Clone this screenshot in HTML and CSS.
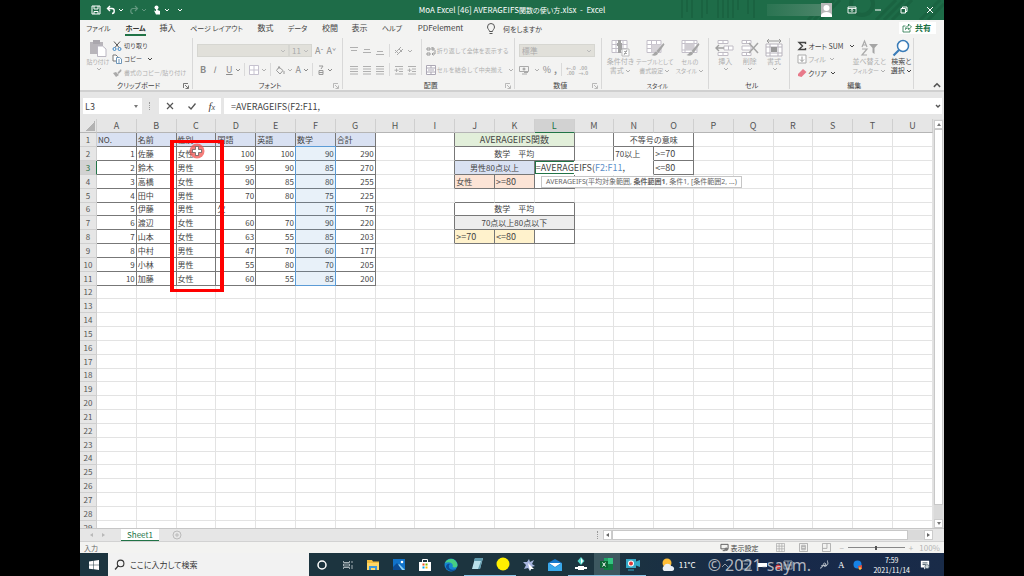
FILE: index.html
```html
<!DOCTYPE html>
<html lang="ja">
<head>
<meta charset="utf-8">
<title>MoA Excel [46] AVERAGEIFS関数の使い方.xlsx - Excel</title>
<link rel="stylesheet" href="styles.css">
</head>
<body>
<svg class="defs" aria-hidden="true">
  <symbol id="chev" viewBox="0 0 6 6"><path d="M1 2l2 2 2-2" fill="none" stroke="currentColor"/></symbol>
  <symbol id="launch" viewBox="0 0 6 6"><path d="M.5 5V.5H5M2 2l3 3M5.500 2.500v3h-3" fill="none" stroke="currentColor" stroke-width=".8"/></symbol>
  <symbol id="lines" viewBox="0 0 10 10"><path d="M1 1.500h8M1 4h8M1 6.500h8M1 9h8" stroke="currentColor"/></symbol>
  <symbol id="top" viewBox="0 0 10 10"><path d="M1 1.500h8M2 4.500h6" stroke="currentColor"/></symbol>
  <symbol id="middle" viewBox="0 0 10 10"><path d="M2 3.500h6M1 6.500h8" stroke="currentColor"/></symbol>
  <symbol id="bottom" viewBox="0 0 10 10"><path d="M2 5.500h6M1 8.500h8" stroke="currentColor"/></symbol>
  <symbol id="indent" viewBox="0 0 10 10"><path d="M1 1.500h8M5 4h4M5 6.500h4M1 9h8M.5 5.200h4M2.500 3.500v3.500" stroke="currentColor"/></symbol>
  <symbol id="grid" viewBox="0 0 10 10"><path d="M.5.5h9v9h-9zM.5 3.500h9M.5 6.500h9M3.500.5v9M6.500.5v9" fill="none" stroke="currentColor" stroke-width=".8"/></symbol>
  <symbol id="borders" viewBox="0 0 10 10"><path d="M.5.5h9v9h-9zM.5 5h9M5 .5v9" fill="#fff" stroke="#c6c2cf"/></symbol>
  <symbol id="tablebrush" viewBox="0 0 20 18"><path d="M2 1.500h14v12H2zM2 5.500h14M2 9.500h14M6.500 1.500v12M11.500 1.500v12" fill="#fff" stroke="#c3bfc9"/><path d="M6.500 5.500h9v8h-9z" fill="#d6d3d8"/><path d="M18.500 4l-7 8 2 2 6-8.500zM11 12.500c-2 .5-2 3-4.500 3.500 3 1.500 6 .5 6.500-2z" fill="#a5a5a5"/></symbol>
  <symbol id="cellbrush" viewBox="0 0 20 18"><path d="M2 1.500h15v12H2zM2 4.500h15M2 11h15M5 1.500v12M14 1.500v12" fill="#fff" stroke="#c3bfc9"/><path d="M5 4.500h9V11H5z" fill="#d0cdd3"/><path d="M18.500 4l-7 8 2 2 6-8.500zM11 12.500c-2 .5-2 3-4.500 3.500 3 1.500 6 .5 6.500-2z" fill="#a5a5a5"/></symbol>
  <symbol id="cellins" viewBox="0 0 20 18"><path d="M3 1.500h10v3H3zM8 1.500v3M3 13.500h10v3H3zM8 13.500v3M9 7h9v4H9zM13.500 7v4" fill="#fff" stroke="#c0bcc5"/><path d="M1 9h8M4 6L1 9l3 3" fill="none" stroke="#a0a0a0" stroke-width="1.400"/></symbol>
  <symbol id="celldel" viewBox="0 0 20 18"><path d="M2 1.500h9v3H2zM6.500 1.500v3M2 13.500h9v3H2zM6.500 13.500v3M2 7h9v4H2z" fill="#fff" stroke="#c0bcc5"/><path d="M9 4l9 10M18 4L9 14" stroke="#a5a5a5" stroke-width="1.500"/></symbol>
  <symbol id="cellfmt" viewBox="0 0 20 18"><path d="M2 5h16v12H2zM6 5v12M14 5v12M2 8h16M2 14h16" fill="#fff" stroke="#b8b4bd"/><path d="M7 8h6v5H7z" fill="#999"/><path d="M3 2h14M5 0L3 2l2 2M15 0l2 2-2 2" fill="none" stroke="#999"/></symbol>
</svg>

<div class="stage">
<main class="app">
  <header class="titlebar">
    <svg class="pattern" viewBox="0 0 264 20" preserveAspectRatio="none" aria-hidden="true"><g stroke="#1a6341" stroke-width="2" fill="none"><path d="M2 0v18M7 0v12M12 0v18M22 0v18M27 0v14M38 0v18M43 0v18M48 0v18M53 0v18M58 0v10M68 0v14M74 0v18"/><path d="M128 20l20-20M134 20l20-20M140 20l20-20M196 20l20-20M204 20l20-20M212 20l20-20M240 20l20-20M248 20l16-16" stroke-width="3"/><circle cx="182" cy="4" r="11" stroke-width="4"/></g></svg>
    <div class="quick">
      <button aria-label="上書き保存"><svg viewBox="0 0 10 10"><path d="M1 1h8v8H1zM3 1v3h4V1M3 9V6.500h4V9" fill="none" stroke="#fff"/></svg></button>
      <button aria-label="元に戻す"><svg viewBox="0 0 10 10"><path d="M4 1L1.500 3.500 4 6M2 3.500h4c3 0 3 5 0 5" fill="none" stroke="#fff" stroke-width="1.400"/></svg><svg class="chev"><use href="#chev"/></svg></button>
      <button class="faint" aria-label="やり直し"><svg viewBox="0 0 10 10"><path d="M6 1l2.500 2.500L6 6M8 3.500H4c-3 0-3 5 0 5" fill="none" stroke="#fff" stroke-width="1.200"/></svg><svg class="chev"><use href="#chev"/></svg></button>
      <button aria-label="タッチ/マウス モード"><svg viewBox="0 0 10 10"><circle cx="4.500" cy="2.500" r="2" fill="#fff"/><path d="M4 2v4L2 5.500 4 9.500h4V6L5.500 5V2z" fill="#fff"/></svg><svg class="chev"><use href="#chev"/></svg></button>
      <button aria-label="カスタマイズ"><svg class="chev"><use href="#chev"/></svg></button>
    </div>
    <h1>MoA Excel [46] AVERAGEIFS<span>関数の使い方</span>.xlsx&nbsp; -&nbsp; Excel</h1>
    <div class="window-tools">
      <span class="account"></span>
      <svg class="avatar" viewBox="0 0 11 14"><path fill="#b9b9b9" d="M0 0h11v14H0z"/><circle cx="5.500" cy="5" r="3" fill="#fff"/><path d="M0 14v-2c2-4 9-4 11 0v2z" fill="#fff"/></svg>
      <button aria-label="リボンの表示オプション"><svg viewBox="0 0 10 10"><path d="M1 2h8v6H1zM1 3.500h8M5 7V4.500M3.800 5.500L5 4.300l1.200 1.200" fill="none" stroke="#fff" stroke-width=".9"/></svg></button>
      <button aria-label="最小化"><svg viewBox="0 0 10 10"><path d="M2 5h6" stroke="#fff"/></svg></button>
      <button aria-label="元に戻す (縮小)"><svg viewBox="0 0 10 10"><path d="M2 3.500h4.500V8H2zM3.500 3.500V2H8v4.500H6.500" fill="none" stroke="#fff"/></svg></button>
      <button aria-label="閉じる"><svg viewBox="0 0 10 10"><path d="M2 2l6 6M8 2L2 8" stroke="#fff"/></svg></button>
    </div>
  </header>

  <nav class="tabs">
    <a href="#" class="kana">ファイル</a><a href="#" class="current kana">ホーム</a><a href="#">挿入</a><a href="#" class="kana">ページ レイアウト</a><a href="#">数式</a><a href="#" class="kana">データ</a><a href="#">校閲</a><a href="#">表示</a><a href="#" class="kana">ヘルプ</a><a href="#">PDFelement</a>
    <a href="#" class="tell kana"><svg viewBox="0 0 10 12"><path d="M3.500 8.500C3.500 7 1.500 6 1.500 4a3.500 3.500 0 0 1 7 0c0 2-2 3-2 4.500zM3.500 10.500h3" fill="none" stroke="#555"/></svg>何をしますか</a>
    <button class="share"><svg viewBox="0 0 10 10"><path d="M3.500 3H1v6h7V6.500M3.500 6.500c0-3 2-3.500 3-3.500V1L9.500 4 6.500 6.500V5c-1 0-2 0-3 1.500z" fill="none" stroke="#217346" stroke-width=".8"/></svg>共有</button>
  </nav>

  <section class="ribbon" aria-label="ホーム">
    <div class="group clipboard">
      <div class="body">
        <button class="big off"><svg viewBox="0 0 18 18"><path d="M1 3h13v12H1z" fill="#b8b5ba"/><path d="M4 1h7v4H4z" fill="#aaa7ad"/><path d="M8.500 7h5l3.500 3v7.500H8.500z" fill="#fff" stroke="#bbb7c2"/></svg>貼り付け<svg class="chev"><use href="#chev"/></svg></button>
        <div class="stack">
          <button><svg viewBox="0 0 10 10"><path d="M2 .5l5 6M8 .5l-5 6" stroke="#555"/><circle cx="2.500" cy="8" r="1.500" fill="none" stroke="#3c86c6"/><circle cx="7.500" cy="8" r="1.500" fill="none" stroke="#3c86c6"/></svg>切り取り</button>
          <button><svg viewBox="0 0 10 10"><path d="M1 1h3l1.500 1.500V7H1z" fill="#fff" stroke="#777"/><path d="M4.500 3.500h3L9.500 5v4.500h-5zM6 6h2M6 8h2" fill="#fff" stroke="#6f96b8"/></svg>コピー<svg class="chev far"><use href="#chev"/></svg></button>
          <button class="off"><svg viewBox="0 0 10 10"><path d="M9 1L5.500 4.500l1 1.500L9.500 3zM1 5l3-1 3 3-3 2z" fill="#aaa"/></svg>書式のコピー/貼り付け</button>
        </div>
      </div>
      <footer>クリップボード<svg class="launch dark"><use href="#launch"/></svg></footer>
    </div>

    <div class="group font">
      <div class="body rows">
        <div class="line">
          <select class="face" aria-label="フォント" disabled><option></option></select><select class="size" aria-label="フォント サイズ" disabled><option>11</option></select>
          <button class="mid letter" aria-label="フォント サイズの拡大">A<sup>ˆ</sup></button><button class="mid letter" aria-label="フォント サイズの縮小">A<sup>ˇ</sup></button>
        </div>
        <div class="line styles">
          <button class="mid letter"><b>B</b></button><button class="mid letter"><i>I</i></button><button class="mid letter"><u>U</u><svg class="chev"><use href="#chev"/></svg></button><hr>
          <button class="off" aria-label="罫線"><svg><use href="#borders"/></svg><svg class="chev"><use href="#chev"/></svg></button><hr>
          <button class="off" aria-label="塗りつぶしの色"><svg viewBox="0 0 10 10"><path d="M4 2l4 3.500L5 9 1.500 5.500zM4 4V1M9 6v3" fill="none" stroke="#999"/></svg><svg class="chev"><use href="#chev"/></svg></button><button class="mid letter">A<svg class="chev"><use href="#chev"/></svg></button><hr>
          <button class="mid ruby" aria-label="ふりがな"><svg viewBox="0 0 8 10"><path d="M2 1h4L4 4M2 5.500h4v4H2zM2 7.500h4" fill="none" stroke="#999"/></svg><svg class="chev"><use href="#chev"/></svg></button>
        </div>
      </div>
      <footer>フォント<svg class="launch"><use href="#launch"/></svg></footer>
    </div>

    <div class="group align">
      <div class="body">
        <div class="rows">
          <div class="line off"><svg><use href="#top"/></svg><svg><use href="#middle"/></svg><svg><use href="#bottom"/></svg><hr><svg viewBox="0 0 10 10"><path d="M1 7l6-6M3 9l6-6M1 4l4 4M5 3l3 3" stroke="#aaa"/></svg><svg class="chev near"><use href="#chev"/></svg></div>
          <div class="line off"><svg><use href="#lines"/></svg><svg><use href="#lines"/></svg><svg><use href="#lines"/></svg><hr><svg><use href="#indent"/></svg><svg><use href="#indent"/></svg></div>
        </div>
        <hr>
        <div class="rows">
          <button class="off"><svg viewBox="0 0 10 10"><path d="M1 2h3v2H1zM6 1v3h2V2H6M1 7h3v2H1zM9 4v4H6M7.500 6.500L6 8l1.500 1.500" fill="none" stroke="#999"/></svg>折り返して全体を表示する</button>
          <button class="off"><svg viewBox="0 0 10 10"><path d="M.5.5h9v9h-9zM.5 3h9M.5 7h9M5 .5V3M5 7v2.500M2 5h6" fill="#fff" stroke="#aca8b5"/></svg>セルを結合して中央揃え<svg class="chev far"><use href="#chev"/></svg></button>
        </div>
      </div>
      <footer>配置<svg class="launch"><use href="#launch"/></svg></footer>
    </div>

    <div class="group number">
      <div class="body rows">
        <select class="format" aria-label="数値の書式" disabled><option>標準</option></select>
        <div class="line off"><svg viewBox="0 0 10 10"><path d="M.5 1.500h9v5h-9z" fill="none" stroke="#aaa"/><circle cx="5" cy="4" r="1.500" fill="#aaa"/><path d="M3 9h5M5 7.500h4" stroke="#aaa"/></svg><svg class="chev"><use href="#chev"/></svg><button class="mid letter">%</button><button class="mid letter"><b>,</b></button><hr><button class="decimals">←.0<br>.00</button><button class="decimals">.00<br>→.0</button></div>
      </div>
      <footer>数値<svg class="launch"><use href="#launch"/></svg></footer>
    </div>

    <div class="group style">
      <div class="body bigs">
        <button class="big off"><svg viewBox="0 0 20 18"><path d="M2 1.500h15v12H2zM2 5.500h15M2 9.500h15M6 1.500v12M13 1.500v12" fill="#fff" stroke="#c3bfc9"/><path d="M8 1h3v3H8zM7 4h5v3H7zM8 7h4v4H8zM8 11h3v3H8z" fill="#a2a2a2"/><path d="M12 10h7v7h-7z" fill="#fff" stroke="#bbb"/><path d="M14 12.500h3M14 14.500h3M17 11l-3 5" stroke="#999" stroke-width=".8"/></svg>条件付き<span>書式<svg class="chev"><use href="#chev"/></svg></span></button>
        <button class="big off tight"><svg><use href="#tablebrush"/></svg>テーブルとして<span>書式設定<svg class="chev"><use href="#chev"/></svg></span></button>
        <button class="big off tight"><svg><use href="#cellbrush"/></svg>セルの<span>スタイル<svg class="chev"><use href="#chev"/></svg></span></button>
      </div>
      <footer class="tight">スタイル</footer>
    </div>

    <div class="group cells">
      <div class="body bigs">
        <button class="big off"><svg><use href="#cellins"/></svg>挿入<svg class="chev"><use href="#chev"/></svg></button>
        <button class="big off"><svg><use href="#celldel"/></svg>削除<svg class="chev"><use href="#chev"/></svg></button>
        <button class="big off"><svg><use href="#cellfmt"/></svg>書式<svg class="chev"><use href="#chev"/></svg></button>
      </div>
      <footer>セル</footer>
    </div>

    <div class="group edit">
      <div class="body">
        <div class="stack">
          <button><svg viewBox="0 0 10 10"><path d="M8.500 3V1.500H2L5.500 5 2 8.500h6.500V7" fill="none" stroke="#444" stroke-width="1.400"/></svg>オート SUM<svg class="chev far"><use href="#chev"/></svg></button>
          <button class="off"><svg viewBox="0 0 10 10"><path d="M1 1h8v8H1z" fill="#fff" stroke="#aaa"/><path d="M5 2.500v5M3 5.500l2 2 2-2" fill="none" stroke="#999"/></svg>フィル<svg class="chev"><use href="#chev"/></svg></button>
          <button><svg viewBox="0 0 10 10"><path d="M6 1l3.500 3L4.500 9 1 8V6z" fill="#e8798a"/></svg>クリア<svg class="chev"><use href="#chev"/></svg></button>
        </div>
        <button class="big off"><svg viewBox="0 0 20 18"><path d="M3 8l2.500-6L8 8M4 6h3M3 10h5l-5 6h5" fill="none" stroke="#aaa" stroke-width="1.200"/><path d="M10 5h9l-3.500 4v6l-2-1.500V9z" fill="#a5a5a5"/></svg>並べ替えと<span class="tight">フィルター<svg class="chev"><use href="#chev"/></svg></span></button>
        <button class="big"><svg viewBox="0 0 20 18"><circle cx="12" cy="7" r="5.500" fill="#fff" stroke="#3a7cb8" stroke-width="1.500"/><path d="M8 11l-5.500 5.500" stroke="#3a7cb8" stroke-width="2.200"/></svg>検索と<span>選択<svg class="chev"><use href="#chev"/></svg></span></button>
      </div>
      <footer>編集</footer>
    </div>
    <button class="collapse" aria-label="リボンを折りたたむ"><svg viewBox="0 0 8 8"><path d="M1.500 5.500L4 3l2.500 2.500" fill="none" stroke="#555" stroke-width="1.200"/></svg></button>
  </section>

  <div class="formula-bar">
    <div class="namebox"><input aria-label="名前ボックス" value="L3"><span class="tri"></span></div>
    <span class="dots"></span>
    <div class="fx">
      <button aria-label="キャンセル"><svg viewBox="0 0 10 10"><path d="M2 2l6 6M8 2L2 8" stroke="#555" stroke-width="1.200"/></svg></button>
      <button aria-label="入力"><svg viewBox="0 0 10 10"><path d="M1.500 5.500L4 8l4.500-5.500" fill="none" stroke="#555" stroke-width="1.300"/></svg></button>
      <button aria-label="関数の挿入"><i>f<small>x</small></i></button>
    </div>
    <div class="formula"><input aria-label="数式バー" value="=AVERAGEIFS(F2:F11,"><svg viewBox="0 0 8 8"><path d="M2 3l2 2 2-2" fill="none" stroke="#555" stroke-width="1.400"/></svg></div>
  </div>

  <section class="workspace">
    <div class="sheet">
      <table id="cells"></table>
      <div class="range"></div>
      <div class="marker"></div>
      <svg class="pointer" viewBox="0 0 16 16"><circle cx="8" cy="8" r="7.500" fill="#f0524e" opacity=".75"/><path d="M6.500 3.500h3v3h3v3h-3v3h-3v-3h-3v-3h3z" fill="#fff" stroke="#555" stroke-width=".7"/></svg>
      <div class="hint" role="tooltip">AVERAGEIFS(平均対象範囲, <b>条件範囲1</b>, 条件1, [条件範囲2, ...)</div>
    </div>
    <div class="vscroll"><button aria-label="上へ"><span class="tri up"></span></button><span class="thumb"></span><span class="gap"></span><button aria-label="下へ"><span class="tri"></span></button></div>
  </section>

  <div class="sheetbar">
    <span class="arrows"><span class="tri left"></span><span class="tri right"></span></span>
    <button class="sheet-tab">Sheet1</button>
    <button class="add" aria-label="新しいシート"><svg viewBox="0 0 10 10"><circle cx="5" cy="5" r="4" fill="none" stroke="#bbb"/><path d="M3 5h4M5 3v4" stroke="#bbb"/></svg></button>
    <span class="dots"></span>
    <div class="hscroll"><button aria-label="左へ"><span class="tri left"></span></button><span class="thumb"></span><span class="gap"></span><button aria-label="右へ"><span class="tri right"></span></button></div>
  </div>

  <div class="status">
    <span class="mode">入力</span>
    <button class="display"><svg viewBox="0 0 10 10"><path d="M1 1.500h8v5H1zM3 8.500h3" fill="none" stroke="#555"/><circle cx="7" cy="7" r="2" fill="#777"/></svg>表示設定</button>
    <div class="views"><svg><use href="#grid"/></svg><svg viewBox="0 0 10 10"><path d="M.5.5h9v9h-9zM3 2.500h4v5H3zM3 4h4M3 6h4" fill="none" stroke="currentColor"/></svg><svg viewBox="0 0 10 10"><path d="M.5.5h9v9h-9zM.5 6h5V.5" fill="none" stroke="currentColor"/></svg></div>
    <span class="faded">−</span><input type="range" aria-label="ズーム" value="50"><span class="faded">+</span><span class="faded zoom">100%</span>
  </div>

  <footer class="taskbar">
    <button class="start" aria-label="スタート"><svg viewBox="0 0 10 10"><path d="M0 1.500l4.500-.7v4H0zM5 .7L10 0v4.800H5zM0 5.300h4.500v4L0 8.700zM5 5.300h5V10l-5-.7z" fill="#fff"/></svg></button>
    <label class="search"><svg viewBox="0 0 10 10"><circle cx="6" cy="4" r="3" fill="none" stroke="#333"/><path d="M4 6L1 9.500" stroke="#333" stroke-width="1.200"/></svg><input placeholder="ここに入力して検索" aria-label="検索"></label>
    <div class="apps">
      <button aria-label="Cortana"><svg viewBox="0 0 14 14"><circle cx="7" cy="7" r="4" fill="none" stroke="#fff" stroke-width="1.500"/></svg></button>
      <button aria-label="タスク ビュー"><svg viewBox="0 0 14 14"><path d="M2.500 3v1.500h6V3M2.500 11V9.500h6V11M2.500 6h6v2h-6zM11 3v2M11 7v4" fill="none" stroke="#b5bfc4" stroke-width=".9"/></svg></button>
      <button aria-label="エクスプローラー"><svg viewBox="0 0 14 14"><path d="M1 2h5l1 1.500h6V12H1z" fill="#f3bd3e"/><path d="M1 5h12v7H1z" fill="#ffd766"/><path d="M3 12V8h8v4H9v-2H5v2z" fill="#3f97d8"/></svg></button>
      <button aria-label="フォト"><svg viewBox="0 0 14 14"><path d="M1 1h12v11H1z" fill="#1173ca"/><path d="M1 12l6-6 6 6z" fill="#8bd3f7"/><path d="M1 12V9l4-4 5 7z" fill="#0b4b93"/><circle cx="10" cy="4" r="1.300" fill="#fff"/></svg></button>
      <button aria-label="ストア"><svg viewBox="0 0 14 14"><path d="M4.500 4V1.500h5V4" fill="none" stroke="#fff"/><path d="M1 4h12v9H1z" fill="#fff"/><path d="M4.500 5.500h2v2h-2z" fill="#f25022"/><path d="M7.500 5.500h2v2h-2z" fill="#7fba00"/><path d="M4.500 8.500h2v2h-2z" fill="#00a4ef"/><path d="M7.500 8.500h2v2h-2z" fill="#ffb900"/></svg></button>
      <button aria-label="Edge"><svg viewBox="0 0 14 14"><circle cx="7" cy="7" r="6.500" fill="#1785d0"/><path d="M1 5C3 0 12-1 13.500 7c0 3-4 3-5 1.500C10 6 6 3 1 5z" fill="#47cf83"/><path d="M5 7c-1 4 3 6 7 4-3 4-9 2-10-2 0-2 2-4 4-3z" fill="#0c4d98"/></svg></button>
      <button class="run" aria-label="メモ帳"><svg viewBox="0 0 14 14"><path d="M5 1h8l-3 11H2z" fill="#b9e0ea"/><path d="M5 1h8l-1 3H4zM8 12l3-8 1 0-2 8z" fill="#5f99ac"/></svg></button>
      <button class="run" aria-label="ポインター"><svg viewBox="0 0 14 14"><circle cx="7" cy="7" r="6.500" fill="#fff000"/></svg></button>
      <button aria-label="ランチャー"><svg viewBox="0 0 14 14"><path d="M7 1l1 3 4-2-2 4 3 2-4 1-1 4-2-3-4 1 2-4-3-3 4 0z" fill="#a7b6df"/><path d="M6 5l6 6H9l-1 2z" fill="#fff"/></svg></button>
      <button aria-label="メール"><svg viewBox="0 0 14 14"><path d="M0 5l7-4 7 4v8H0z" fill="#1678cb"/><path d="M1 5h12L7 9z" fill="#fff"/><path d="M0 5l7 4.500L14 5v8H0z" fill="#39a9ec"/></svg></button>
      <button class="run" aria-label="Filmora"><svg viewBox="0 0 14 14"><path d="M7 0l3.500 4L7 8 3.500 4z" fill="#55d6cc"/><path d="M7 1l2 3-2 3z" fill="#fff"/><path d="M1 10h12v2H1zM4 9h6v4H4z" fill="#fff"/></svg></button>
      <button class="run active" aria-label="Excel"><svg viewBox="0 0 14 14"><path d="M4 1h9v12H4z" fill="#21a366"/><path d="M8 1h5v6H8z" fill="#33c481"/><path d="M4 7h9v6H4z" fill="#107c41"/><path d="M0 4h8v7H0z" fill="#0c6535"/><path d="M2.500 5.500l3 4M5.500 5.500l-3 4" stroke="#fff"/></svg></button>
      <button class="run" aria-label="レコーダー"><svg viewBox="0 0 14 14"><path d="M0 2h10v2.500L14 3v7l-4-1.500V11H0z" fill="#35a9c7"/><circle cx="5" cy="6.500" r="3" fill="#fff"/><circle cx="5" cy="6.500" r="2" fill="#dc3838"/><path d="M2 13h6" stroke="#35a9c7"/></svg></button>
    </div>
    <div class="weather"><svg viewBox="0 0 14 14"><circle cx="6" cy="5" r="4.500" fill="#ffbd37"/><path d="M3 13a3 3 0 0 1 0-5c1-3 6-3 7 0 4 0 4 5 1 5z" fill="#e9eef4"/></svg>11°C</div>
    <div class="tray">
      <div class="small"><svg viewBox="0 0 78 12"><path d="M2 8l3-3 3 3M22 2h8v8h-8zM24 5h4M64 2h8v8h-8zM68 2v8M64 6h8" fill="none" stroke="#8d9aa5"/><path d="M38 4h9v4h-9z" fill="#fff"/><circle cx="58" cy="8" r="2.500" fill="#d43f43"/></svg></div>
      <p class="mark">© 2021-saym.</p>
    </div>
    <div class="input-tools"><svg viewBox="0 0 10 10"><path d="M1 8c3 1 3-6 5-5s-3 5 1 3 0-6 2-5M2 6l6-1" fill="none" stroke="#c0c8d0"/></svg><b>A</b><svg viewBox="0 0 10 10"><circle cx="4.500" cy="4.500" r="4" fill="#1782e4"/><path d="M5 6l4-1v4H6z" fill="#e04a3f"/><circle cx="7" cy="8.500" r="1.300" fill="#f7c23d"/></svg></div>
    <time class="clock">7:59<br>2021/11/14</time>
    <button class="notice" aria-label="通知"><svg viewBox="0 0 12 12"><path d="M1 1h10v8H7.500L5 11.500V9H1z" fill="#fff"/><path d="M3 3.500h6M3 5.500h4" stroke="#28404d"/><circle cx="8.500" cy="8" r="2.500" fill="#cdd5da" stroke="#28404d" stroke-width=".7"/></svg></button>
  </footer>
</main>
</div>
<script src="sheet.js"></script>
</body>
</html>
```
FILE: styles.css
```css
* { box-sizing: border-box; }
body { margin: 0; background: #000; font-family: "Noto Sans CJK JP", "Noto Sans", sans-serif; font-size: 7px; color: #444; }
button, input, select { font: inherit; color: inherit; margin: 0; padding: 0; border: 0; background: none; min-width: 0; border-radius: 0; }
button { display: flex; align-items: center; white-space: nowrap; }
a { color: inherit; text-decoration: none; }
h1, p { margin: 0; }
svg { width: 10px; height: 10px; flex: none; }
.defs { display: none; }
.stage { height: 100vh; padding: 0 80px; }
.app { height: 100%; display: flex; flex-direction: column; background: #e6e6e6; overflow: hidden; }
svg.chev { width: 6px; height: 6px; margin-left: 2px; }
.off { color: #b0b0b0; }
.mid { color: #8a8a8a; }

.titlebar { height: 20px; flex: none; position: relative; display: grid; grid-template-columns: 1fr auto 1fr; align-items: center; background: #1e6c48; color: #fff; }
.pattern { position: absolute; right: 0; top: 0; width: 264px; height: 20px; }
.titlebar h1 { font-size: 8px; line-height: 18px; font-weight: 400; white-space: nowrap; font-feature-settings: "palt"; }
.titlebar h1 span { font-size: 7px; }
.quick { display: flex; gap: 5px; padding-left: 11px; }
.faint { opacity: .3; }
.window-tools { position: relative; display: flex; align-items: center; justify-content: flex-end; gap: 16px; padding-right: 9px; }
.account { width: 54px; height: 12px; background: linear-gradient(90deg, #2b7452, #4a8468); margin-right: -16px; }
svg.avatar { width: 11px; height: 14px; margin-right: -1px; }

.tabs { height: 17px; flex: none; display: grid; grid-template-columns: 37px 37px 27px 71px 27px 37px 28px 31px 34px 63px 1fr auto; background: #f3f3f2; font-size: 8px; font-feature-settings: "palt"; line-height: 16px; text-align: center; white-space: nowrap; padding-right: 8px; }
.tabs a { display: flex; justify-content: center; position: relative; }
.tabs .kana { font-size: 7px; }
.tabs .current { font-weight: 700; color: #333; }
.current::after { content: ""; position: absolute; left: 8px; right: 8px; bottom: 1px; height: 2px; background: #217346; }
.tabs .tell { justify-content: flex-start; align-items: center; gap: 7px; padding-left: 14px; }
.tell svg { height: 12px; }
.share { background: #fff; color: #217346; font-weight: 700; gap: 3px; height: 12px; margin-top: 2px; padding: 0 5px 0 3px; }

.ribbon { height: 55px; flex: none; display: flex; background: #f3f3f2; border-bottom: 2px solid #d0d0d0; font-feature-settings: "palt"; }
.group { flex: 1 1 0; min-width: 0; display: flex; flex-direction: column; position: relative; padding: 2px 0 0 4px; }
.group::after { content: ""; position: absolute; right: 0; top: 1px; bottom: 1px; width: 1px; background: #d8d8d8; }
.clipboard { flex-grow: 113; }
.font { flex-grow: 151; }
.align { flex-grow: 174; }
.number { flex-grow: 86; }
.style { flex-grow: 107; }
.cells { flex-grow: 80; }
.edit { flex-grow: 124; }
.group footer { text-align: center; line-height: 9px; position: relative; color: #444; }
.launch { position: absolute; right: 4px; top: 2px; width: 6px; height: 6px; color: #aaa; }
.launch.dark { color: #555; }
.body { flex: 1; display: flex; min-height: 0; }
.body > hr, .line hr { width: 1px; border: 0; margin: 0 1px; background: #dadada; height: 13px; flex: none; }
.body > hr { height: 36px; }
.big { flex-direction: column; flex: none; line-height: 9px; }
.big > svg:first-child { width: 20px; height: 18px; }
.big span { display: flex; align-items: center; }
.big .chev { margin-left: 1px; }
.group .tight, .clipboard .big, .clipboard .stack, .align .rows button { font-size: 6px; }
.clipboard .stack, .align .rows button { font-feature-settings: normal; }
.clipboard .big { width: 28px; }
.stack { display: flex; flex-direction: column; justify-content: space-around; line-height: 10px; padding-bottom: 1px; }
.stack button { gap: 1px; }
.clipboard .stack svg:first-child { margin-right: 1px; }
svg.far { margin-left: 4px; }
svg.near { margin-left: 0; }
.bigs { justify-content: space-around; padding-right: 4px; }
.rows { display: flex; flex-direction: column; justify-content: center; gap: 6px; }
.line { display: flex; align-items: center; height: 13px; gap: 3px; }
.letter { font-size: 9px; line-height: 13px; }
.letter sup { font-size: 7px; line-height: 6px; }
.styles { justify-content: space-between; padding: 0 10px 0 3px; }
.styles button { min-width: 10px; }
.ruby svg:first-child { width: 8px; }
.group select { height: 13px; background: #e1e0da url("data:image/svg+xml,%3Csvg xmlns='http://www.w3.org/2000/svg' width='6' height='6'%3E%3Cpath d='M1 2l2 2 2-2' fill='none' stroke='%23bbb'/%3E%3C/svg%3E") right 2px center no-repeat; border: 1px solid #d6d6d1; appearance: none; opacity: 1; color: #aaa; padding-left: 2px; font-size: 8px; line-height: 11px; }
.group .face { width: 92px; }
.group .size { width: 23px; margin-left: -3px; }
.align .rows { padding: 0 2px; }
.align .rows button { gap: 1px; height: 13px; }
.align .body { gap: 1px; }
.number .format { width: 76px; }
.decimals { font-size: 5px; line-height: 5px; font-weight: 700; }
.edit .body { gap: 4px; padding-left: 3px; }
.edit .stack { width: 54px; }
.edit .big { width: 28px; }
.collapse { align-self: flex-end; width: 30px; height: 10px; justify-content: flex-end; padding-right: 2px; }

.formula-bar { flex: none; display: flex; gap: 3px; padding: 6px 2px 5px 3px; height: 27px; font-size: 9px; }
.namebox { width: 59px; display: flex; align-items: center; background: #fff; padding: 0 4px 0 2px; }
.namebox input { flex: 1; }
.formula-bar .dots { margin: 0 4px; }
.dots { width: 3px; border-left: 1px dotted #999; height: 8px; align-self: center; }
.fx { width: 62px; display: flex; justify-content: space-around; background: #fff; }
.fx i { font-family: "Liberation Serif", serif; font-size: 11px; }
.fx small { font-size: 8px; }
.formula { flex: 1; display: flex; align-items: center; background: #fff; padding-left: 7px; }
.formula input { flex: 1; }
.formula svg { width: 8px; height: 8px; }
.tri { width: 0; height: 0; border: 2px solid transparent; border-top: 3px solid #777; border-bottom: 0; }
.tri.up { border: 2px solid transparent; border-bottom: 3px solid #777; border-top: 0; }
.tri.left { border: 2px solid transparent; border-right: 3px solid #666; border-left: 0; }
.tri.right { border: 2px solid transparent; border-left: 3px solid #666; border-right: 0; }

.workspace { flex: 1; min-height: 0; display: flex; }
.sheet { flex: 1; min-width: 0; position: relative; overflow: hidden; }
#cells { width: 100%; table-layout: fixed; border-collapse: separate; border-spacing: 0; background: #fff; font-size: 8px; line-height: 12px; }
#cells tr { height: 14px; }
#cells tbody tr:nth-child(6n) { height: 13px; }
#cells th, #cells td { padding: 0 1px; border: 0 solid #e3e3e3; border-width: 0 1px 1px 0; white-space: nowrap; text-align: left; vertical-align: middle; line-height: 12px; }
#cells th { background: #e6e6e6; font-weight: 400; text-align: center; border-color: #cfcfcf; color: #555; padding: 0; }
#cells thead th { font-size: 9px; border-bottom-color: #b5b5b5; }
#cells thead th:first-child { width: 17px; }
.corner { margin: 0 1px 0 auto; width: 10px; height: 10px; background: linear-gradient(135deg, transparent 50%, #b3b3b3 50%); }
#cells th.on { background: #d2d2d2; color: #217346; border-bottom-color: #217346; }
#cells tbody th.on { border-bottom-color: #cfcfcf; border-right-color: #217346; }
#cells td.num { text-align: right; }
#cells td.mid-text { text-align: center; color: #444; }
#cells td.wide { font-size: 9px; }
#cells td.br { border-right-color: #777; }
#cells td.bb { border-bottom-color: #777; }
.blue { background: #d9e1f2; }
.green { background: #e2efda; }
.peach { background: #fce4d6; }
.grey { background: #ededed; }
.yellow { background: #fff2cc; }
#cells td.entry { border-bottom-color: #fff; background: linear-gradient(#217346, #217346) 0 0 / 33% 1px no-repeat, linear-gradient(#217346, #217346) 0 100% / 33% 1px no-repeat, linear-gradient(#217346, #217346) 0 0 / 1px 100% no-repeat; }
#cells td.open { border-bottom-color: #fff; }
.entry em { font-style: normal; color: #5c8fc9; }
.range { position: absolute; left: 215px; top: 27px; width: 41px; height: 140px; border: 1px solid #5b9bd5; background: rgba(91, 155, 213, .14); }
.marker { position: absolute; left: 90px; top: 21px; width: 54px; height: 152px; border: 4px solid #f00; border-width: 3px 4px; }
.pointer { position: absolute; left: 109px; top: 24px; width: 16px; height: 16px; }
.hint { position: absolute; left: 461px; top: 57px; padding: 0 4px; border: 1px solid #c6c6c6; background: #fff; font-family: "Noto Sans", "Noto Sans CJK JP", sans-serif; font-size: 7px; line-height: 10px; white-space: nowrap; color: #666; }
.vscroll { width: 11px; display: flex; flex-direction: column; padding: 1px 1px 0; background: #e0e0e0; }
.vscroll button, .hscroll button { background: #fff; border: 1px solid #ccc; width: 9px; height: 9px; justify-content: center; flex: none; }
.thumb { flex: 1; background: #fff; border: 1px solid #c8c8c8; }
.vscroll .gap { height: 14px; background: #dadada; }

.sheetbar { height: 13px; flex: none; display: flex; align-items: center; border-top: 1px solid #c6c6c6; padding-right: 11px; }
.arrows { width: 41px; display: flex; gap: 9px; justify-content: center; opacity: .35; padding-right: 6px; }
.sheet-tab { align-self: stretch; width: 38px; justify-content: center; background: #fff; color: #217346; border-bottom: 1px solid #217346; font-size: 8px; }
.add { margin: 0 auto 0 13px; }
.hscroll { width: 330px; height: 10px; margin-left: 3px; display: flex; align-items: stretch; }
.hscroll button { height: 10px; }
.hscroll .gap { width: 16px; background: #dadada; }

.status { height: 12px; flex: none; display: flex; align-items: center; background: #f3f3f1; border-top: 1px solid #d2d2d2; padding: 0 4px; gap: 4px; line-height: 10px; }
.mode { flex: 1; color: #666; }
.display { gap: 1px; margin-right: 14px; }
.status svg { width: 9px; height: 9px; }
.views { display: flex; gap: 14px; margin-right: 4px; color: #aaa; }
.faded { color: #b5b5b5; font-size: 8px; }
.zoom { margin-left: 2px; }
.status input { appearance: none; width: 57px; height: 1px; background: #888; }
.status input::-webkit-slider-thumb { appearance: none; width: 2px; height: 4px; background: #555; }

.taskbar { height: 23px; flex: none; display: flex; align-items: stretch; background: linear-gradient(90deg, #1c343f 60%, #17294a 80%, #192b48); color: #fff; }
.start { width: 28px; justify-content: center; }
.search { flex: 197 1 0; display: flex; align-items: center; gap: 5px; background: #f2f2f2; padding-left: 6px; }
.search svg { width: 11px; height: 11px; }
.search input { flex: 1; font-size: 8px; font-feature-settings: "palt"; }
.search input::placeholder { color: #333; opacity: 1; }
.apps { flex: 341 1 0; display: grid; grid-template-columns: repeat(13, 1fr); }
.apps button { justify-content: center; }
.apps svg, .weather svg { width: 14px; height: 14px; }
.apps .run { border-bottom: 1px solid #8cc6e8; }
.apps .active { background: #3d5860; }
.weather { flex: none; display: flex; align-items: center; gap: 4px; padding: 0 12px 0 15px; font-size: 8px; }
.tray { flex: none; display: grid; align-items: center; padding-right: 3px; }
.small, .mark { grid-area: 1 / 1; }
.small svg { display: block; width: 78px; height: 12px; margin: auto; }
.mark { font-family: "Noto Sans", sans-serif; font-size: 16px; line-height: 22px; color: rgba(215, 218, 222, .8); position: relative; }
.input-tools { display: flex; align-items: center; gap: 9px; padding: 0 10px 0 5px; }
.input-tools b { font-family: "Liberation Serif", serif; font-size: 9px; font-weight: 400; }
.clock { flex: none; text-align: center; font-size: 7px; line-height: 10px; align-self: center; }
.notice { padding: 0 14px 0 10px; }
```
FILE: sheet.js
```js
const letters = "ABCDEFGHIJKLMNOPQRSTU".split("");
const ROWS = 29;
const cells = {};

const put = (ref, text, cls = "", span = 1) => { cells[ref] = { text, cls, span }; };

["NO.", "名前", "性別", "国語", "英語", "数学", "合計"].forEach((t, i) => put(letters[i] + 1, t, "blue"));
[
  [1, "佐藤", "女性", 100, 100, 90, 290],
  [2, "鈴木", "男性", 95, 90, 85, 270],
  [3, "高橋", "女性", 90, 85, 80, 255],
  [4, "田中", "男性", 70, 80, 75, 225],
  [5, "伊藤", "男性", "欠", "", 75, 75],
  [6, "渡辺", "女性", 60, 70, 90, 220],
  [7, "山本", "女性", 63, 55, 85, 203],
  [8, "中村", "男性", 47, 70, 60, 177],
  [9, "小林", "男性", 55, 80, 70, 205],
  [10, "加藤", "女性", 60, 55, 85, 200]
].forEach((row, r) => row.forEach((v, c) => put(letters[c] + (r + 2), v, typeof v === "number" ? "num" : "")));

put("J1", "AVERAGEIFS関数", "green mid-text wide", 3);
put("J2", "数学　平均", "mid-text", 3);
put("J3", "男性80点以上", "blue mid-text", 2);
put("L3", "=AVERAGEIFS(<em>F2:F11</em>,", "entry wide", 3);
put("J4", "女性", "peach");
put("K4", "&gt;=80", "peach wide");
put("L4", "");
put("J6", "数学　平均", "mid-text", 3);
put("J7", "70点以上80点以下", "grey mid-text", 3);
put("J8", "&gt;=70", "yellow wide");
put("K8", "&lt;=80", "yellow wide");
put("L8", "");
put("N1", "不等号の意味", "mid-text", 2);
put("N2", "70以上", "open");
put("O2", "&gt;=70", "wide");
put("O3", "&lt;=80", "wide");

const blocks = [[0, 1, 6, 11], [9, 1, 11, 4], [9, 6, 11, 8], [13, 1, 14, 3]];
const inBlock = (c, r) => blocks.some(([c1, r1, c2, r2]) => c >= c1 && c <= c2 && r >= r1 && r <= r2);

let html = "<thead><tr><th><div class='corner'></div></th>" +
  letters.map(l => `<th${l === "L" ? " class='on'" : ""}>${l}</th>`).join("") + "</tr></thead><tbody>";
for (let r = 1; r <= ROWS; r++) {
  html += `<tr><th${r === 3 ? " class='on'" : ""}>${r}</th>`;
  for (let c = 0; c < letters.length;) {
    const cell = cells[letters[c] + r] || { text: "", cls: "", span: 1 };
    const last = c + cell.span - 1;
    const cls = [cell.cls];
    if (inBlock(last, r) || inBlock(last + 1, r)) cls.push("br");
    if (inBlock(c, r) || inBlock(c, r + 1)) cls.push("bb");
    html += `<td class="${cls.join(" ").trim()}" colspan="${cell.span}">${cell.text}</td>`;
    c += cell.span;
  }
  html += "</tr>";
}
document.getElementById("cells").innerHTML = html + "</tbody>";
```
